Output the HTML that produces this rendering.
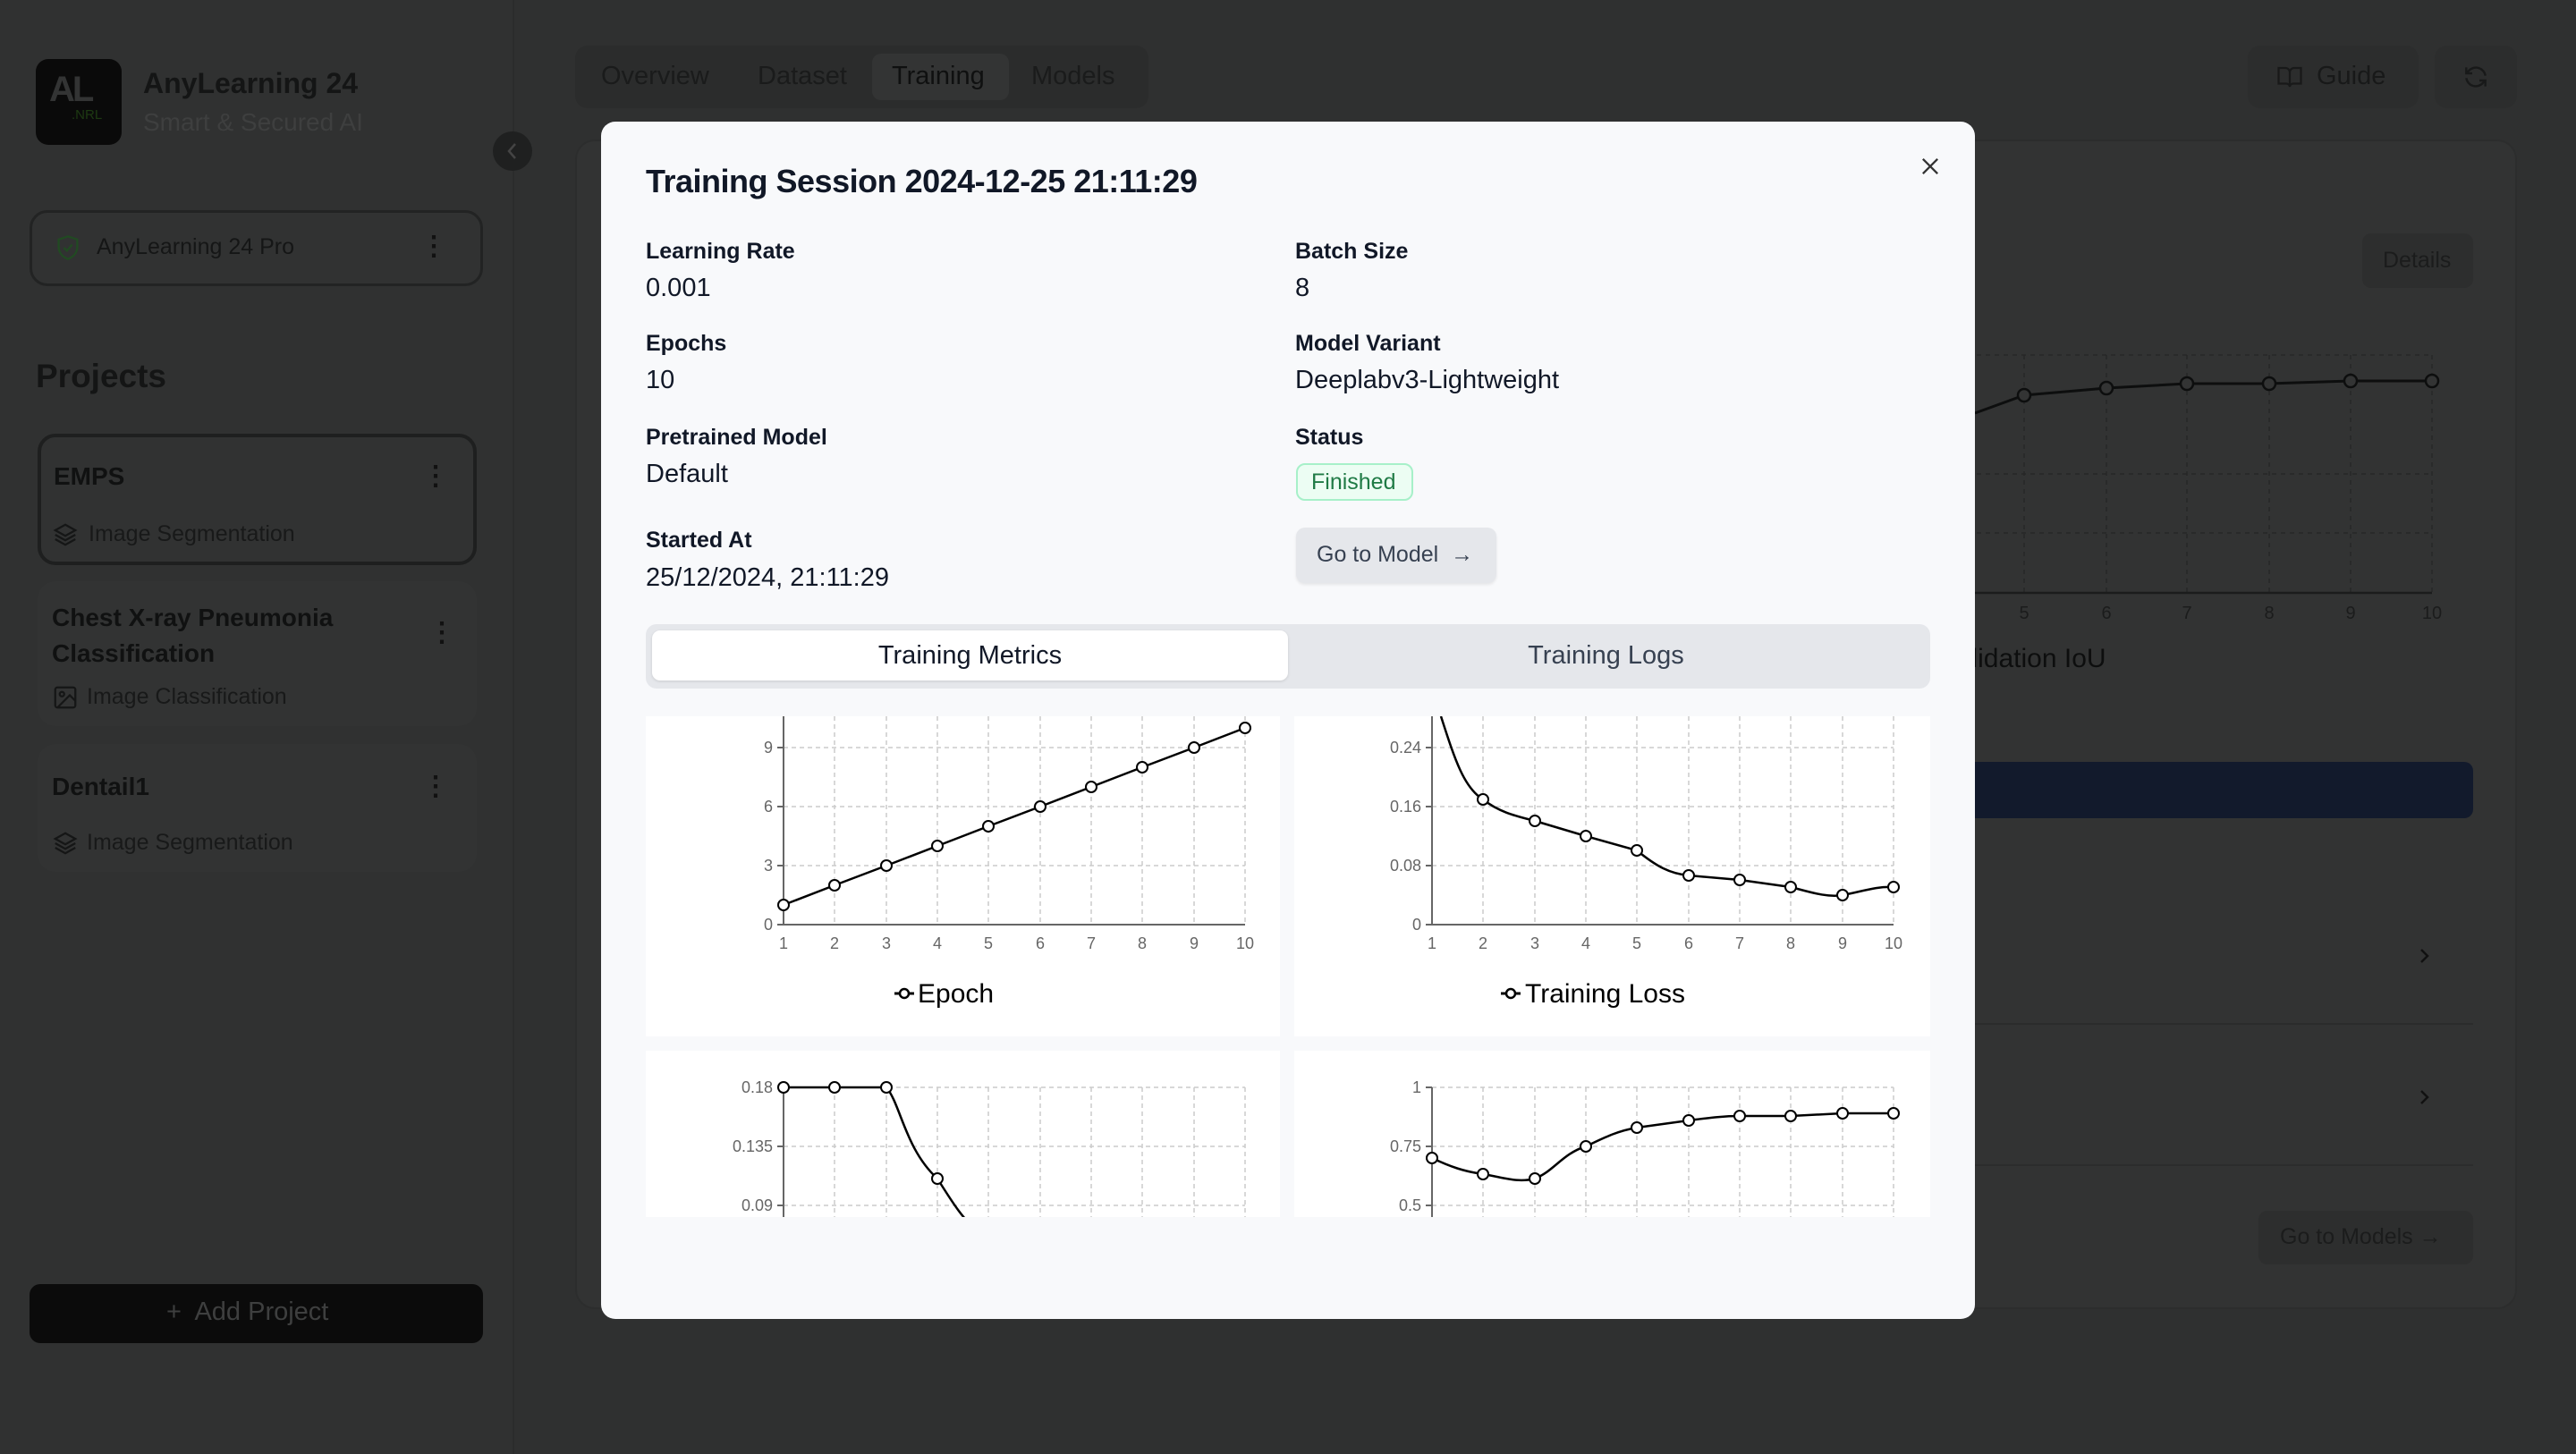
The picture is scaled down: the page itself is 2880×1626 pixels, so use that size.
<!DOCTYPE html>
<html><head><meta charset="utf-8"><style>
*{box-sizing:border-box;margin:0;padding:0}
body{width:2880px;height:1626px;background:#2f3030;font-family:"Liberation Sans",sans-serif;position:relative;overflow:hidden}
.abs{position:absolute}
.t{position:absolute;white-space:nowrap}
.card{position:absolute;border-radius:20px;background:#323333}
.lbl{position:absolute;font-size:25px;font-weight:bold;color:#111827}
.val{position:absolute;font-size:29px;color:#111827}
.chart{position:absolute;background:#fff;overflow:hidden}
</style></head><body>
<!-- sidebar -->
<div class="abs" style="left:0;top:0;width:575px;height:1626px;background:#303131;border-right:2px solid #2b2c2c"></div>
<div class="abs" style="left:40px;top:66px;width:96px;height:96px;background:#0a0a0a;border-radius:14px"></div>
<div class="t" style="left:55px;top:78px;font-size:40px;font-weight:bold;color:#333434;letter-spacing:-3px">AL</div>
<div class="t" style="left:80px;top:120px;font-size:15px;color:#1d3a12">.NRL</div>
<div class="t" style="left:160px;top:75px;font-size:32px;font-weight:bold;color:#141515">AnyLearning 24</div>
<div class="t" style="left:160px;top:121px;font-size:28px;color:#3e3f3f">Smart &amp; Secured AI</div>
<div class="abs" style="left:551px;top:147px;width:44px;height:44px;border-radius:50%;background:#1f2020"></div>
<svg class="abs" style="left:561px;top:157px" width="24" height="24" viewBox="0 0 24 24"><path d="M15 4l-7 8 7 8" stroke="#444" stroke-width="2.5" fill="none"/></svg>
<div class="abs" style="left:33px;top:235px;width:507px;height:85px;border:3px solid #222323;border-radius:20px;background:#313232"></div>
<svg class="abs" style="left:62px;top:262px" width="28" height="30" viewBox="0 0 24 26"><path d="M12 2l9 3v7c0 6-4 10-9 12-5-2-9-6-9-12V5z" stroke="#214a22" stroke-width="2" fill="none"/><path d="M8 13l3 3 5-6" stroke="#214a22" stroke-width="2" fill="none"/></svg>
<div class="t" style="left:108px;top:262px;font-size:25px;color:#151616">AnyLearning 24 Pro</div>
<div class="t" style="left:470px;top:258px;font-size:30px;color:#111;font-weight:bold">⋮</div>
<div class="t" style="left:40px;top:400px;font-size:37px;font-weight:bold;color:#141515">Projects</div>
<div class="abs" style="left:42px;top:485px;width:491px;height:147px;border:4px solid #1e1f1f;border-radius:20px;background:#313232"></div>
<div class="t" style="left:60px;top:517px;font-size:28px;font-weight:bold;color:#101111">EMPS</div>
<div class="t" style="left:472px;top:515px;font-size:30px;font-weight:bold;color:#111">⋮</div>
<svg class="abs" style="left:58px;top:583px" width="30" height="30" viewBox="0 0 24 24"><path d="M12 3l9 5-9 5-9-5z M3 12l9 5 9-5 M3 16l9 5 9-5" stroke="#151616" stroke-width="1.8" fill="none"/></svg>
<div class="t" style="left:99px;top:583px;font-size:25px;color:#181919">Image Segmentation</div>
<div class="card" style="left:42px;top:650px;width:491px;height:162px;background:#323333"></div>
<div class="t" style="left:58px;top:671px;font-size:28px;font-weight:bold;color:#101111;line-height:40px">Chest X-ray Pneumonia<br>Classification</div>
<div class="t" style="left:479px;top:690px;font-size:30px;font-weight:bold;color:#111">⋮</div>
<svg class="abs" style="left:58px;top:765px" width="30" height="30" viewBox="0 0 24 24"><rect x="3" y="3" width="18" height="18" rx="2" stroke="#151616" stroke-width="1.8" fill="none"/><circle cx="9" cy="9" r="2" stroke="#151616" stroke-width="1.8" fill="none"/><path d="M21 15l-5-5L5 21" stroke="#151616" stroke-width="1.8" fill="none"/></svg>
<div class="t" style="left:97px;top:765px;font-size:25px;color:#181919">Image Classification</div>
<div class="card" style="left:42px;top:832px;width:491px;height:143px"></div>
<div class="t" style="left:58px;top:864px;font-size:28px;font-weight:bold;color:#101111">Dentail1</div>
<div class="t" style="left:472px;top:862px;font-size:30px;font-weight:bold;color:#111">⋮</div>
<svg class="abs" style="left:58px;top:928px" width="30" height="30" viewBox="0 0 24 24"><path d="M12 3l9 5-9 5-9-5z M3 12l9 5 9-5 M3 16l9 5 9-5" stroke="#151616" stroke-width="1.8" fill="none"/></svg>
<div class="t" style="left:97px;top:928px;font-size:25px;color:#181919">Image Segmentation</div>
<div class="abs" style="left:33px;top:1436px;width:507px;height:66px;background:#0b0b0b;border-radius:12px"></div>
<div class="t" style="left:186px;top:1451px;font-size:29px;color:#3e3f3f">+&nbsp; Add Project</div>

<!-- top nav -->
<div class="abs" style="left:643px;top:51px;width:641px;height:70px;background:#2b2c2c;border-radius:14px"></div>
<div class="abs" style="left:975px;top:60px;width:153px;height:52px;background:#333434;border-radius:10px"></div>
<div class="t" style="left:672px;top:69px;font-size:29px;color:#1a1b1b">Overview</div>
<div class="t" style="left:847px;top:69px;font-size:29px;color:#1a1b1b">Dataset</div>
<div class="t" style="left:997px;top:69px;font-size:29px;color:#0f1010">Training</div>
<div class="t" style="left:1153px;top:69px;font-size:29px;color:#1a1b1b">Models</div>
<div class="abs" style="left:2513px;top:51px;width:191px;height:70px;background:#2c2d2d;border-radius:14px"></div>
<svg class="abs" style="left:2545px;top:71px" width="30" height="30" viewBox="0 0 24 24"><path d="M2 4h6a4 4 0 014 4v13a3 3 0 00-3-3H2z M22 4h-6a4 4 0 00-4 4v13a3 3 0 013-3h7z" stroke="#181919" stroke-width="1.8" fill="none"/></svg>
<div class="t" style="left:2590px;top:69px;font-size:29px;color:#181919">Guide</div>
<div class="abs" style="left:2722px;top:51px;width:92px;height:70px;background:#2c2d2d;border-radius:14px"></div>
<svg class="abs" style="left:2752px;top:70px" width="32" height="32" viewBox="0 0 24 24"><path d="M20 11a8 8 0 00-14-4l-2 2 M4 4v5h5 M4 13a8 8 0 0014 4l2-2 M20 20v-5h-5" stroke="#181919" stroke-width="1.8" fill="none"/></svg>

<!-- main panel -->
<div class="abs" style="left:643px;top:156px;width:2171px;height:1308px;background:#323333;border:2px solid #2c2d2d;border-radius:22px"></div>
<div class="abs" style="left:2641px;top:261px;width:124px;height:61px;background:#2d2e2e;border-radius:10px"></div>
<div class="t" style="left:2664px;top:277px;font-size:25px;color:#1b1c1c">Details</div>
<svg class="abs" style="left:2180px;top:380px" width="600" height="320">
<g stroke="#262727" stroke-width="1.5" stroke-dasharray="5 5">
<line x1="0" y1="17" x2="539" y2="17"/><line x1="0" y1="150" x2="539" y2="150"/><line x1="0" y1="216" x2="539" y2="216"/>
<line x1="83" y1="17" x2="83" y2="283"/><line x1="175" y1="17" x2="175" y2="283"/><line x1="265" y1="17" x2="265" y2="283"/><line x1="357" y1="17" x2="357" y2="283"/><line x1="448" y1="17" x2="448" y2="283"/><line x1="539" y1="17" x2="539" y2="283"/></g>
<line x1="0" y1="283" x2="539" y2="283" stroke="#1b1c1c" stroke-width="2.5"/>
<polyline points="28,82 83,62 175,54 265,49 357,49 448,46 539,46" stroke="#0d0e0e" stroke-width="3" fill="none"/>
<g fill="#333434" stroke="#0d0e0e" stroke-width="2.5"><circle cx="83" cy="62" r="7"/><circle cx="175" cy="54" r="7"/><circle cx="265" cy="49" r="7"/><circle cx="357" cy="49" r="7"/><circle cx="448" cy="46" r="7"/><circle cx="539" cy="46" r="7"/></g>
<g fill="#1b1c1c" font-size="20" text-anchor="middle" font-family="Liberation Sans"><text x="83" y="312">5</text><text x="175" y="312">6</text><text x="265" y="312">7</text><text x="357" y="312">8</text><text x="448" y="312">9</text><text x="539" y="312">10</text></g>
</svg>
<div class="t" style="left:2170px;top:720px;font-size:30px;color:#0d0e0e">Validation IoU</div>
<div class="abs" style="left:2180px;top:852px;width:585px;height:63px;background:#121a2c;border-radius:10px"></div>
<div class="abs" style="left:2180px;top:1144px;width:585px;height:2px;background:#2b2c2c"></div>
<div class="abs" style="left:2180px;top:1302px;width:585px;height:2px;background:#2b2c2c"></div>
<svg class="abs" style="left:2698px;top:1057px" width="24" height="24" viewBox="0 0 24 24"><path d="M9 5l7 7-7 7" stroke="#111" stroke-width="2.5" fill="none"/></svg>
<svg class="abs" style="left:2698px;top:1215px" width="24" height="24" viewBox="0 0 24 24"><path d="M9 5l7 7-7 7" stroke="#111" stroke-width="2.5" fill="none"/></svg>
<div class="abs" style="left:2525px;top:1354px;width:240px;height:60px;background:#2d2e2e;border-radius:10px"></div>
<div class="t" style="left:2549px;top:1369px;font-size:25px;color:#1b1c1c">Go to Models →</div>

<!-- modal -->
<div class="abs" style="left:672px;top:136px;width:1536px;height:1339px;background:#f8f9fb;border-radius:16px"></div>
<div class="t" style="left:722px;top:182px;font-size:36px;font-weight:bold;color:#111827;letter-spacing:-0.5px">Training Session 2024-12-25 21:11:29</div>
<svg class="abs" style="left:2144px;top:172px" width="28" height="28" viewBox="0 0 24 24"><path d="M5 5l14 14M19 5L5 19" stroke="#333" stroke-width="2" fill="none"/></svg>
<div class="lbl" style="left:722px;top:267px">Learning Rate</div><div class="val" style="left:722px;top:306px">0.001</div>
<div class="lbl" style="left:722px;top:370px">Epochs</div><div class="val" style="left:722px;top:409px">10</div>
<div class="lbl" style="left:722px;top:475px">Pretrained Model</div><div class="val" style="left:722px;top:514px">Default</div>
<div class="lbl" style="left:722px;top:590px">Started At</div><div class="val" style="left:722px;top:630px">25/12/2024, 21:11:29</div>
<div class="lbl" style="left:1448px;top:267px">Batch Size</div><div class="val" style="left:1448px;top:306px">8</div>
<div class="lbl" style="left:1448px;top:370px">Model Variant</div><div class="val" style="left:1448px;top:409px">Deeplabv3-Lightweight</div>
<div class="lbl" style="left:1448px;top:475px">Status</div>
<div class="abs" style="left:1449px;top:518px;width:131px;height:42px;background:#ecfdf3;border:2px solid #a7f0c9;border-radius:10px"></div>
<div class="t" style="left:1466px;top:525px;font-size:25px;color:#1f7a45">Finished</div>
<div class="abs" style="left:1449px;top:590px;width:224px;height:62px;background:#e5e7eb;border-radius:10px;box-shadow:0 2px 3px rgba(0,0,0,.08)"></div>
<div class="t" style="left:1472px;top:606px;font-size:25px;color:#374151">Go to Model &nbsp;→</div>
<div class="abs" style="left:722px;top:698px;width:1436px;height:72px;background:#e5e7eb;border-radius:12px"></div>
<div class="abs" style="left:729px;top:705px;width:711px;height:56px;background:#fff;border-radius:9px;box-shadow:0 1px 3px rgba(0,0,0,.12)"></div>
<div class="t" style="left:729px;top:717px;width:711px;text-align:center;font-size:29px;color:#111827">Training Metrics</div>
<div class="t" style="left:1440px;top:717px;width:711px;text-align:center;font-size:29px;color:#374151">Training Logs</div>

<!-- charts -->
<div class="chart" style="left:722px;top:801px;width:709px;height:358px">
<svg width="709" height="358" font-family="Liberation Sans">
<g stroke="#ccc" stroke-width="1.5" stroke-dasharray="5 4">
<line x1="154" y1="35" x2="670" y2="35"/><line x1="154" y1="101" x2="670" y2="101"/><line x1="154" y1="167" x2="670" y2="167"/>
<line x1="211" y1="0" x2="211" y2="233"/><line x1="269" y1="0" x2="269" y2="233"/><line x1="326" y1="0" x2="326" y2="233"/><line x1="383" y1="0" x2="383" y2="233"/><line x1="441" y1="0" x2="441" y2="233"/><line x1="498" y1="0" x2="498" y2="233"/><line x1="555" y1="0" x2="555" y2="233"/><line x1="613" y1="0" x2="613" y2="233"/><line x1="670" y1="0" x2="670" y2="233"/></g>
<g stroke="#666" stroke-width="2"><line x1="154" y1="0" x2="154" y2="233"/><line x1="154" y1="233" x2="670" y2="233"/>
<line x1="147" y1="35" x2="154" y2="35"/><line x1="147" y1="101" x2="154" y2="101"/><line x1="147" y1="167" x2="154" y2="167"/><line x1="147" y1="233" x2="154" y2="233"/></g>
<g fill="#666" font-size="18" text-anchor="end"><text x="142" y="41">9</text><text x="142" y="107">6</text><text x="142" y="173">3</text><text x="142" y="239">0</text></g>
<g fill="#666" font-size="18" text-anchor="middle"><text x="154" y="260">1</text><text x="211" y="260">2</text><text x="269" y="260">3</text><text x="326" y="260">4</text><text x="383" y="260">5</text><text x="441" y="260">6</text><text x="498" y="260">7</text><text x="555" y="260">8</text><text x="613" y="260">9</text><text x="670" y="260">10</text></g>
<polyline points="154,211 211,189 269,167 326,145 383,123 441,101 498,79 555,57 613,35 670,13" stroke="#000" stroke-width="2.5" fill="none"/>
<g fill="#fff" stroke="#000" stroke-width="2"><circle cx="154" cy="211" r="6"/><circle cx="211" cy="189" r="6"/><circle cx="269" cy="167" r="6"/><circle cx="326" cy="145" r="6"/><circle cx="383" cy="123" r="6"/><circle cx="441" cy="101" r="6"/><circle cx="498" cy="79" r="6"/><circle cx="555" cy="57" r="6"/><circle cx="613" cy="35" r="6"/><circle cx="670" cy="13" r="6"/></g>
<line x1="278" y1="310" x2="300" y2="310" stroke="#000" stroke-width="3"/><circle cx="289" cy="310" r="5" fill="#fff" stroke="#000" stroke-width="2.5"/>
<text x="304" y="320" font-size="30" fill="#000">Epoch</text>
</svg></div>

<div class="chart" style="left:1447px;top:801px;width:711px;height:358px">
<svg width="711" height="358" font-family="Liberation Sans">
<g stroke="#ccc" stroke-width="1.5" stroke-dasharray="5 4">
<line x1="154" y1="35" x2="670" y2="35"/><line x1="154" y1="101" x2="670" y2="101"/><line x1="154" y1="167" x2="670" y2="167"/>
<line x1="211" y1="0" x2="211" y2="233"/><line x1="269" y1="0" x2="269" y2="233"/><line x1="326" y1="0" x2="326" y2="233"/><line x1="383" y1="0" x2="383" y2="233"/><line x1="441" y1="0" x2="441" y2="233"/><line x1="498" y1="0" x2="498" y2="233"/><line x1="555" y1="0" x2="555" y2="233"/><line x1="613" y1="0" x2="613" y2="233"/><line x1="670" y1="0" x2="670" y2="233"/></g>
<g stroke="#666" stroke-width="2"><line x1="154" y1="0" x2="154" y2="233"/><line x1="154" y1="233" x2="670" y2="233"/>
<line x1="147" y1="35" x2="154" y2="35"/><line x1="147" y1="101" x2="154" y2="101"/><line x1="147" y1="167" x2="154" y2="167"/><line x1="147" y1="233" x2="154" y2="233"/></g>
<g fill="#666" font-size="18" text-anchor="end"><text x="142" y="41">0.24</text><text x="142" y="107">0.16</text><text x="142" y="173">0.08</text><text x="142" y="239">0</text></g>
<g fill="#666" font-size="18" text-anchor="middle"><text x="154" y="260">1</text><text x="211" y="260">2</text><text x="269" y="260">3</text><text x="326" y="260">4</text><text x="383" y="260">5</text><text x="441" y="260">6</text><text x="498" y="260">7</text><text x="555" y="260">8</text><text x="613" y="260">9</text><text x="670" y="260">10</text></g>
<path d="M164,0 C180,50 190,80 211,93 C230,108 250,112 269,117 L326,134 L383,150 C405,168 420,176 441,178 L498,183 L555,191 C575,196 595,203 613,200 C635,196 650,190 670,191" stroke="#000" stroke-width="2.5" fill="none"/>
<g fill="#fff" stroke="#000" stroke-width="2"><circle cx="211" cy="93" r="6"/><circle cx="269" cy="117" r="6"/><circle cx="326" cy="134" r="6"/><circle cx="383" cy="150" r="6"/><circle cx="441" cy="178" r="6"/><circle cx="498" cy="183" r="6"/><circle cx="555" cy="191" r="6"/><circle cx="613" cy="200" r="6"/><circle cx="670" cy="191" r="6"/></g>
<line x1="231" y1="310" x2="253" y2="310" stroke="#000" stroke-width="3"/><circle cx="242" cy="310" r="5" fill="#fff" stroke="#000" stroke-width="2.5"/>
<text x="258" y="320" font-size="30" fill="#000">Training Loss</text>
</svg></div>

<div class="chart" style="left:722px;top:1175px;width:709px;height:186px">
<svg width="709" height="186" font-family="Liberation Sans">
<g stroke="#ccc" stroke-width="1.5" stroke-dasharray="5 4">
<line x1="154" y1="41" x2="670" y2="41"/><line x1="154" y1="107" x2="670" y2="107"/><line x1="154" y1="173" x2="670" y2="173"/>
<line x1="211" y1="41" x2="211" y2="186"/><line x1="269" y1="41" x2="269" y2="186"/><line x1="326" y1="41" x2="326" y2="186"/><line x1="383" y1="41" x2="383" y2="186"/><line x1="441" y1="41" x2="441" y2="186"/><line x1="498" y1="41" x2="498" y2="186"/><line x1="555" y1="41" x2="555" y2="186"/><line x1="613" y1="41" x2="613" y2="186"/><line x1="670" y1="41" x2="670" y2="186"/></g>
<g stroke="#666" stroke-width="2"><line x1="154" y1="41" x2="154" y2="186"/><line x1="147" y1="41" x2="154" y2="41"/><line x1="147" y1="107" x2="154" y2="107"/><line x1="147" y1="173" x2="154" y2="173"/></g>
<g fill="#666" font-size="18" text-anchor="end"><text x="142" y="47">0.18</text><text x="142" y="113">0.135</text><text x="142" y="179">0.09</text></g>
<path d="M154,41 L269,41 C285,60 290,110 326,143 C340,165 355,190 370,200" stroke="#000" stroke-width="2.5" fill="none"/>
<g fill="#fff" stroke="#000" stroke-width="2"><circle cx="154" cy="41" r="6"/><circle cx="211" cy="41" r="6"/><circle cx="269" cy="41" r="6"/><circle cx="326" cy="143" r="6"/></g>
</svg></div>

<div class="chart" style="left:1447px;top:1175px;width:711px;height:186px">
<svg width="711" height="186" font-family="Liberation Sans">
<g stroke="#ccc" stroke-width="1.5" stroke-dasharray="5 4">
<line x1="154" y1="41" x2="670" y2="41"/><line x1="154" y1="107" x2="670" y2="107"/><line x1="154" y1="173" x2="670" y2="173"/>
<line x1="211" y1="41" x2="211" y2="186"/><line x1="269" y1="41" x2="269" y2="186"/><line x1="326" y1="41" x2="326" y2="186"/><line x1="383" y1="41" x2="383" y2="186"/><line x1="441" y1="41" x2="441" y2="186"/><line x1="498" y1="41" x2="498" y2="186"/><line x1="555" y1="41" x2="555" y2="186"/><line x1="613" y1="41" x2="613" y2="186"/><line x1="670" y1="41" x2="670" y2="186"/></g>
<g stroke="#666" stroke-width="2"><line x1="154" y1="41" x2="154" y2="186"/><line x1="147" y1="41" x2="154" y2="41"/><line x1="147" y1="107" x2="154" y2="107"/><line x1="147" y1="173" x2="154" y2="173"/></g>
<g fill="#666" font-size="18" text-anchor="end"><text x="142" y="47">1</text><text x="142" y="113">0.75</text><text x="142" y="179">0.5</text></g>
<path d="M154,120 C175,130 190,135 211,138 C235,142 250,148 269,143 C290,135 300,115 326,107 C345,98 360,90 383,86 L441,78 C465,75 480,73 498,73 L555,73 L613,70 L670,70" stroke="#000" stroke-width="2.5" fill="none"/>
<g fill="#fff" stroke="#000" stroke-width="2"><circle cx="154" cy="120" r="6"/><circle cx="211" cy="138" r="6"/><circle cx="269" cy="143" r="6"/><circle cx="326" cy="107" r="6"/><circle cx="383" cy="86" r="6"/><circle cx="441" cy="78" r="6"/><circle cx="498" cy="73" r="6"/><circle cx="555" cy="73" r="6"/><circle cx="613" cy="70" r="6"/><circle cx="670" cy="70" r="6"/></g>
</svg></div>
</body></html>
